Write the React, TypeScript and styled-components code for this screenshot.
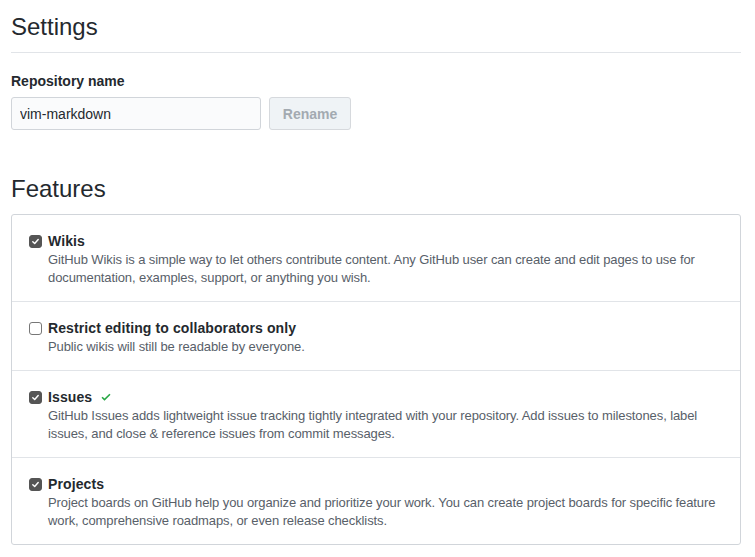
import React from "react";
import styled, { createGlobalStyle } from "styled-components";

const Global = createGlobalStyle`
  html, body { margin: 0; padding: 0; background: #fff; }
  body {
    font-family: "Liberation Sans", Arial, sans-serif;
    color: #24292e;
    -webkit-font-smoothing: antialiased;
  }
`;

const Page = styled.div`
  width: 730px;
  padding: 0 14px 0 11px;
  display: flex;
  flex-direction: column;
`;

const Subhead = styled.div<{ $border?: boolean }>`
  padding-top: ${(p) => (p.$border ? "12px" : "0")};
  padding-bottom: 10px;
  border-bottom: ${(p) => (p.$border ? "1px solid #e1e4e8" : "none")};
`;

const Heading = styled.h2`
  margin: 0;
  font-size: 24px;
  font-weight: 400;
  line-height: 30px;
  color: #24292e;
`;

const FieldLabel = styled.div`
  margin-top: 18px;
  font-size: 14px;
  font-weight: 700;
  line-height: 20px;
`;

const FieldRow = styled.div`
  display: flex;
  gap: 8px;
  margin-top: 6px;
  margin-bottom: 44px;
`;

const TextInput = styled.input`
  box-sizing: border-box;
  width: 250px;
  height: 33px;
  padding: 6px 8px;
  font-family: inherit;
  font-size: 14px;
  color: #24292e;
  background: #fafbfc;
  border: 1px solid #d1d5da;
  border-radius: 3px;
  outline: none;
`;

const Button = styled.button`
  box-sizing: border-box;
  width: 82px;
  height: 33px;
  font-family: inherit;
  font-size: 14px;
  font-weight: 700;
  color: #a3aab1;
  background: #eff3f6;
  border: 1px solid #d6d9dd;
  border-radius: 3px;
`;

const Box = styled.div`
  border: 1px solid #d1d5da;
  border-radius: 3px;
`;

const Row = styled.div<{ $last?: boolean }>`
  display: flex;
  gap: 6px;
  padding: 16px 16px 14px 17px;
  border-bottom: ${(p) => (p.$last ? "none" : "1px solid #e1e4e8")};
`;

const Check = styled.span<{ $on: boolean }>`
  flex: none;
  box-sizing: border-box;
  width: 13px;
  height: 13px;
  margin-top: 4px;
  border-radius: 3px;
  display: flex;
  align-items: center;
  justify-content: center;
  background: ${(p) => (p.$on ? "#555" : "#fff")};
  border: 1px solid ${(p) => (p.$on ? "#555" : "#777")};
`;

const Body = styled.div`
  display: flex;
  flex-direction: column;
`;

const Title = styled.div`
  display: flex;
  align-items: center;
  gap: 8px;
  font-size: 14px;
  font-weight: 700;
  line-height: 20px;
  letter-spacing: 0.1px;
  color: #24292e;
`;

const Note = styled.div`
  font-size: 13px;
  line-height: 18px;
  letter-spacing: -0.1px;
  color: #586069;
`;

const features = [
  {
    on: true,
    title: "Wikis",
    note: "GitHub Wikis is a simple way to let others contribute content. Any GitHub user can create and edit pages to use for documentation, examples, support, or anything you wish.",
  },
  {
    on: false,
    title: "Restrict editing to collaborators only",
    note: "Public wikis will still be readable by everyone.",
  },
  {
    on: true,
    title: "Issues",
    ok: true,
    note: "GitHub Issues adds lightweight issue tracking tightly integrated with your repository. Add issues to milestones, label issues, and close & reference issues from commit messages.",
  },
  {
    on: true,
    title: "Projects",
    note: "Project boards on GitHub help you organize and prioritize your work. You can create project boards for specific feature work, comprehensive roadmaps, or even release checklists.",
  },
];

export default function App() {
  return (
    <>
      <Global />
      <Page>
        <Subhead $border>
          <Heading>Settings</Heading>
        </Subhead>
        <FieldLabel>Repository name</FieldLabel>
        <FieldRow>
          <TextInput defaultValue="vim-markdown" />
          <Button disabled>Rename</Button>
        </FieldRow>
        <Subhead>
          <Heading>Features</Heading>
        </Subhead>
        <Box>
          {features.map((f, i) => (
            <Row key={f.title} $last={i === features.length - 1}>
              <Check $on={f.on}>
                {f.on && (
                  <svg width="9" height="9" viewBox="0 0 10 10">
                    <path d="M2 5.2 L4.1 7.2 L8 2.8" fill="none" stroke="#fff" strokeWidth="1.6" strokeLinecap="round" strokeLinejoin="round" />
                  </svg>
                )}
              </Check>
              <Body>
                <Title>
                  {f.title}
                  {f.ok && (
                    <svg width="12" height="12" viewBox="0 0 12 16">
                      <path fillRule="evenodd" d="M12 5l-8 8-4-4 1.5-1.5L4 10l6.5-6.5L12 5z" fill="#28a745" />
                    </svg>
                  )}
                </Title>
                <Note>{f.note}</Note>
              </Body>
            </Row>
          ))}
        </Box>
      </Page>
    </>
  );
}
